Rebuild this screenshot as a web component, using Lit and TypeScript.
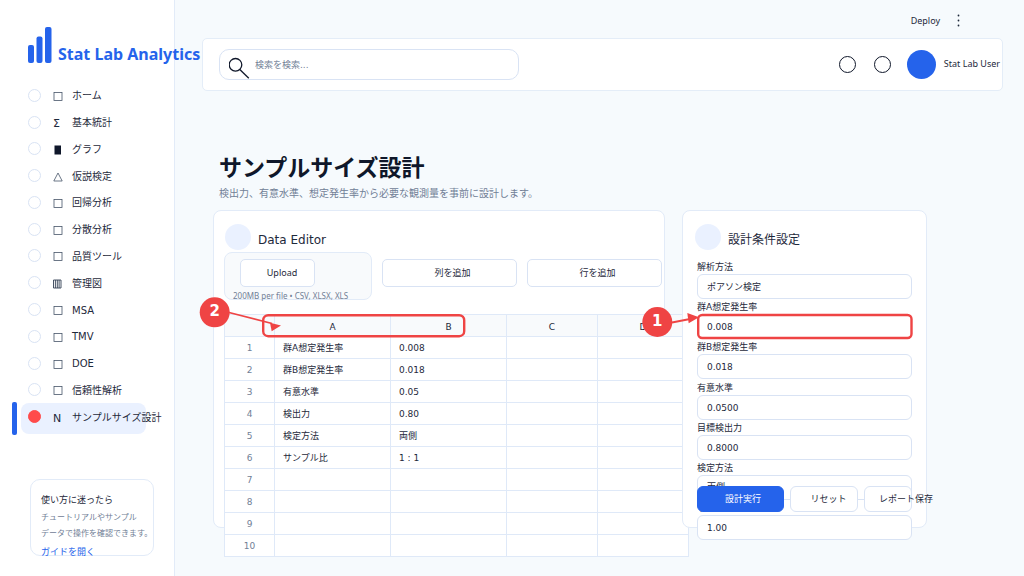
import { LitElement, html, css, svg } from "lit";
import { customElement, state } from "lit/decorators.js";
import { classMap } from "lit/directives/class-map.js";

type IconKind = "box" | "bar" | "triangle" | "grid" | "sigma" | "n";

interface NavEntry {
  label: string;
  icon: IconKind;
}

interface Field {
  id: string;
  label: string;
  value: string;
  options?: string[];
}

const NAV: NavEntry[] = [
  { label: "ホーム", icon: "box" },
  { label: "基本統計", icon: "sigma" },
  { label: "グラフ", icon: "bar" },
  { label: "仮説検定", icon: "triangle" },
  { label: "回帰分析", icon: "box" },
  { label: "分散分析", icon: "box" },
  { label: "品質ツール", icon: "box" },
  { label: "管理図", icon: "grid" },
  { label: "MSA", icon: "box" },
  { label: "TMV", icon: "box" },
  { label: "DOE", icon: "box" },
  { label: "信頼性解析", icon: "box" },
  { label: "サンプルサイズ設計", icon: "n" },
];

const ROWS: string[][] = [
  ["群A想定発生率", "0.008"],
  ["群B想定発生率", "0.018"],
  ["有意水準", "0.05"],
  ["検出力", "0.80"],
  ["検定方法", "両側"],
  ["サンプル比", "1 : 1"],
  [],
  [],
  [],
  [],
];

const FIELDS: Field[] = [
  { id: "method", label: "解析方法", value: "ポアソン検定", options: ["ポアソン検定"] },
  { id: "rate-a", label: "群A想定発生率", value: "0.008" },
  { id: "rate-b", label: "群B想定発生率", value: "0.018" },
  { id: "alpha", label: "有意水準", value: "0.0500" },
  { id: "power", label: "目標検出力", value: "0.8000" },
  { id: "side", label: "検定方法", value: "両側", options: ["両側", "片側"] },
  { id: "ratio", label: "サンプル比", value: "1.00" },
];

const shared = css`
  *,
  *::before {
    box-sizing: border-box;
  }
  button,
  input,
  select {
    font: inherit;
    color: inherit;
    margin: 0;
  }
  button {
    cursor: pointer;
  }
`;

@customElement("lab-sidebar")
export class LabSidebar extends LitElement {
  @state() private selected = NAV.length - 1;

  static styles = [
    shared,
    css`
      :host {
        display: flex;
        flex-direction: column;
        flex: none;
        width: 175px;
        background: #ffffff;
        border-right: 1px solid #e2ebf8;
        padding: 27px 20px 20px 28px;
        white-space: nowrap;
      }
      .brand {
        display: flex;
        align-items: flex-end;
        gap: 6px;
        height: 36px;
        color: #2563eb;
        font: bold 16px/18px "Noto Sans", "Noto Sans CJK JP", sans-serif;
      }
      .brand svg {
        flex: none;
      }
      .nav {
        display: grid;
        grid-template-columns: minmax(0, 1fr);
        grid-auto-rows: 1fr;
        height: 348px;
        margin-top: 19px;
      }
      .item {
        position: relative;
        display: grid;
        grid-template-columns: 13px 7px minmax(0, 1fr);
        column-gap: 12px;
        align-items: center;
        font-size: 10px;
        cursor: pointer;
      }
      .item.active {
        margin: 0 8px -4px -7px;
        padding: 0 0 4px 7px;
        background: #eaf1ff;
        border-radius: 8px;
      }
      .item.active::before {
        content: "";
        position: absolute;
        left: -9px;
        top: -1px;
        bottom: -1px;
        width: 5px;
        border-radius: 2px;
        background: #2563eb;
      }
      .radio {
        appearance: none;
        width: 13px;
        height: 13px;
        border: 1px solid #d9e3f4;
        border-radius: 50%;
        background: #ffffff;
      }
      .radio:checked {
        border-color: #ff4b4b;
        background: #ff4b4b;
      }
      .icon {
        display: block;
        padding-top: 2px;
        overflow: visible;
      }
      .name {
        padding-top: 2px;
      }
      .help {
        height: 77px;
        margin: 49px 0 0 2px;
        padding: 11px 10px;
        border: 1px solid #e2ebf8;
        border-radius: 10px;
        font-size: 8px;
        line-height: 16px;
        color: #718096;
      }
      .help h2 {
        margin: 0 0 1px;
        font-size: 9px;
        font-weight: 400;
        line-height: 18px;
        color: #1e293b;
      }
      .help p {
        margin: 0 0 1px;
      }
      .help a {
        font-size: 9px;
        line-height: 18px;
        color: #2563eb;
        text-decoration: none;
      }
    `,
  ];

  private icon(kind: IconKind) {
    const shapes = {
      box: svg`<rect x="1" y="1.5" width="8" height="8" fill="none" stroke="#475569" stroke-width="0.8" />`,
      bar: svg`<rect x="1.5" y="1.5" width="6.5" height="9" fill="#0f172a" />`,
      triangle: svg`<path d="M5 2 9.2 10H0.8Z" fill="none" stroke="#475569" stroke-width="0.8" />`,
      grid: svg`<path d="M0.5 2H8V10H0.5ZM2.4 2V10M4.3 2V10M6.1 2V10" fill="none" stroke="#334155" stroke-width="0.9" />`,
      sigma: svg`<text x="0" y="9" font-size="11" fill="#1e293b">Σ</text>`,
      n: svg`<text x="0" y="10" font-size="11" fill="#1e293b">N</text>`,
    };
    return html`<svg class="icon" width="12" height="13" viewBox="0 0 12 11" aria-hidden="true">${shapes[kind]}</svg>`;
  }

  render() {
    return html`
      <div class="brand">
        <svg width="24" height="36" viewBox="0 0 24 36" fill="#2563eb" aria-hidden="true">
          <rect x="0" y="18" width="6" height="18" rx="2" />
          <rect x="8.5" y="9.5" width="6" height="26.5" rx="2" />
          <rect x="17" y="0" width="6.5" height="36" rx="2" />
        </svg>
        <span>Stat Lab Analytics</span>
      </div>
      <nav class="nav">
        ${NAV.map(
          (entry, i) => html`
            <label class=${classMap({ item: true, active: i === this.selected })}>
              <input
                class="radio"
                type="radio"
                name="page"
                .checked=${i === this.selected}
                @change=${() => (this.selected = i)}
              />
              ${this.icon(entry.icon)}
              <span class="name">${entry.label}</span>
            </label>
          `
        )}
      </nav>
      <section class="help">
        <h2>使い方に迷ったら</h2>
        <p>チュートリアルやサンプル<br />データで操作を確認できます。</p>
        <a href="#guide">ガイドを開く</a>
      </section>
    `;
  }
}

@customElement("lab-topbar")
export class LabTopbar extends LitElement {
  static styles = [
    shared,
    css`
      :host {
        display: block;
        padding: 0 21px 0 27px;
        font-size: 9px;
      }
      .tools {
        display: flex;
        align-items: center;
        justify-content: flex-end;
        gap: 14px;
        height: 38px;
        padding: 4px 40px 0 0;
      }
      .plain {
        display: block;
        padding: 0;
        border: 0;
        background: none;
      }
      .latin {
        font-family: "Noto Sans", sans-serif;
      }
      .bar {
        display: flex;
        align-items: center;
        height: 53px;
        padding: 0 2px 0 16px;
        border: 1px solid #e4edf8;
        border-radius: 5px;
        background: #ffffff;
      }
      .search {
        display: flex;
        align-items: flex-start;
        width: 300px;
        height: 31px;
        margin-right: auto;
        padding-left: 9px;
        border: 1px solid #d9e3f4;
        border-radius: 10px;
      }
      .search svg {
        flex: none;
        margin-top: 7px;
      }
      .query {
        flex: 1;
        min-width: 0;
        height: 29px;
        padding: 0 5px;
        border: 0;
        outline: 0;
        background: none;
      }
      .query::placeholder {
        color: #718096;
        opacity: 1;
      }
      .round {
        width: 17px;
        height: 17px;
        margin-right: 18px;
        padding: 0;
        border: 1px solid #0f172a;
        border-radius: 50%;
        background: none;
      }
      .avatar {
        width: 29px;
        height: 29px;
        margin: 0 8px 0 -2px;
        border-radius: 50%;
        background: #2563eb;
      }
    `,
  ];

  render() {
    return html`
      <div class="tools">
        <button class="plain latin">Deploy</button>
        <button class="plain" aria-label="メニュー">
          <svg width="9" height="14" viewBox="0 0 9 14" fill="#1e293b">
            <circle cx="4.5" cy="2.5" r="0.9" />
            <circle cx="4.5" cy="7.5" r="0.9" />
            <circle cx="4.5" cy="12.5" r="0.9" />
          </svg>
        </button>
      </div>
      <header class="bar">
        <label class="search">
          <svg width="21" height="22" viewBox="0 0 21 22" fill="none" stroke="#0f172a" stroke-width="1.3" aria-hidden="true">
            <circle cx="6.5" cy="7.8" r="6.3" />
            <path d="M10.8 12.5 19.8 21.3" />
          </svg>
          <input class="query" type="text" aria-label="検索" placeholder="検索を検索..." />
        </label>
        <button class="round" aria-label="通知"></button>
        <button class="round" aria-label="ヘルプ"></button>
        <span class="avatar"></span>
        <span class="latin">Stat Lab User</span>
      </header>
    `;
  }
}

@customElement("data-editor")
export class DataEditor extends LitElement {
  static styles = [
    shared,
    css`
      :host {
        display: block;
        height: 318px;
        padding: 13px 2px 0 10px;
        border: 1px solid #e2ebf8;
        border-radius: 8px;
        background: #ffffff;
        font-size: 9px;
      }
      .head {
        display: flex;
        gap: 7px;
        height: 26px;
        padding-left: 1px;
      }
      .dot {
        width: 26px;
        height: 26px;
        border-radius: 50%;
        background: #eaf1ff;
      }
      .head h2 {
        margin: 0;
        padding-top: 8px;
        font-size: 12px;
        line-height: 16px;
        font-weight: 400;
      }
      .actions {
        display: grid;
        grid-template-columns: 148px 1fr 1fr;
        column-gap: 10px;
        margin-top: 2px;
        align-items: start;
      }
      .drop {
        height: 48px;
        padding: 6px 8px 0;
        border: 1px solid #e2ebf8;
        border-radius: 8px;
        background: #f8fafc;
      }
      .btn {
        display: block;
        width: 100%;
        height: 28px;
        padding: 0 0 0 6px;
        border: 1px solid #d9e3f4;
        border-radius: 5px;
        background: #ffffff;
      }
      .drop .btn {
        width: 75px;
        margin-left: 7px;
        padding-left: 9px;
        font-family: "Noto Sans", sans-serif;
      }
      .actions > .btn {
        margin-top: 7px;
      }
      .hint {
        margin: 0;
        padding-top: 3px;
        font: 8px/12px "Noto Sans", sans-serif;
        color: #718096;
        white-space: nowrap;
      }
      .sheet {
        position: relative;
        width: calc(100% + 27px);
        margin-top: 14px;
        border-collapse: collapse;
        table-layout: fixed;
        background: #ffffff;
      }
      .sheet th,
      .sheet td {
        height: 22px;
        padding: 1px 8px;
        border: 1px solid #dfe9f8;
        font-weight: 400;
        line-height: 12px;
        text-align: left;
      }
      .sheet thead th {
        background: #f8fafc;
        padding-top: 3px;
        text-align: center;
      }
      .sheet tbody th {
        color: #718096;
        text-align: center;
      }
      .c0 {
        width: 50px;
      }
      .c1 {
        width: 25%;
      }
      .c2 {
        width: 25%;
      }
    `,
  ];

  render() {
    return html`
      <div class="head">
        <span class="dot"></span>
        <h2>Data Editor</h2>
      </div>
      <div class="actions">
        <div class="drop">
          <button class="btn">Upload</button>
          <p class="hint">200MB per file • CSV, XLSX, XLS</p>
        </div>
        <button class="btn">列を追加</button>
        <button class="btn">行を追加</button>
      </div>
      <table class="sheet">
        <colgroup>
          <col class="c0" />
          <col class="c1" />
          <col class="c2" />
          <col />
          <col />
        </colgroup>
        <thead>
          <tr>
            <th></th>
            ${["A", "B", "C", "D"].map((name) => html`<th scope="col">${name}</th>`)}
          </tr>
        </thead>
        <tbody>
          ${ROWS.map(
            (row, i) => html`
              <tr>
                <th scope="row">${i + 1}</th>
                ${[0, 1, 2, 3].map((c) => html`<td>${row[c] ?? ""}</td>`)}
              </tr>
            `
          )}
        </tbody>
      </table>
    `;
  }
}

@customElement("design-form")
export class DesignForm extends LitElement {
  static styles = [
    shared,
    css`
      :host {
        position: relative;
        display: block;
        height: 318px;
        padding: 13px 14px 0;
        border: 1px solid #e2ebf8;
        border-radius: 8px;
        background: #ffffff;
        font-size: 9px;
      }
      .head {
        display: flex;
        gap: 7px;
        height: 26px;
        margin-left: -2px;
      }
      .dot {
        width: 26px;
        height: 26px;
        border-radius: 50%;
        background: #eaf1ff;
      }
      .head h2 {
        margin: 0;
        padding-top: 8px;
        font-size: 12px;
        line-height: 16px;
        font-weight: 400;
      }
      .fields {
        display: grid;
        grid-auto-rows: 1fr;
        height: 281px;
        margin-top: 9px;
      }
      .field {
        display: flex;
        flex-direction: column;
        justify-content: flex-end;
      }
      .field label {
        line-height: 14px;
      }
      .control {
        appearance: none;
        width: 100%;
        height: 25px;
        padding: 1px 9px 0;
        border: 1px solid #d9e3f4;
        border-radius: 6px;
        outline: 0;
        background: #ffffff;
      }
      .buttons {
        position: absolute;
        left: 14px;
        right: 14px;
        bottom: 15px;
        display: grid;
        grid-template-columns: 87px 68px 1fr;
        gap: 6px;
      }
      .btn {
        height: 26px;
        padding: 0 0 0 9px;
        border: 1px solid #d9e3f4;
        border-radius: 6px;
        background: #ffffff;
        white-space: nowrap;
      }
      .btn.primary {
        padding-left: 5px;
        border-color: #2563eb;
        background: #2563eb;
        color: #ffffff;
      }
      .btn.last {
        min-width: 0;
        padding-left: 14px;
        text-align: left;
      }
    `,
  ];

  private control(f: Field) {
    return f.options
      ? html`<select class="control" id=${f.id}>
          ${f.options.map((o) => html`<option ?selected=${o === f.value}>${o}</option>`)}
        </select>`
      : html`<input class="control" id=${f.id} type="text" .value=${f.value} />`;
  }

  render() {
    return html`
      <div class="head">
        <span class="dot"></span>
        <h2>設計条件設定</h2>
      </div>
      <form class="fields">
        ${FIELDS.map(
          (f) => html`
            <div class="field">
              <label for=${f.id}>${f.label}</label>
              ${this.control(f)}
            </div>
          `
        )}
      </form>
      <div class="buttons">
        <button class="btn primary">設計実行</button>
        <button class="btn">リセット</button>
        <button class="btn last">レポート保存</button>
      </div>
    `;
  }
}

@customElement("app-root")
export class AppRoot extends LitElement {
  static styles = [
    shared,
    css`
      :host {
        position: relative;
        display: flex;
        min-height: 100vh;
        background: #f6fafd;
        color: #1e293b;
        font-family: "DejaVu Sans", "Noto Sans CJK JP", sans-serif;
        line-height: 1.2;
      }
      .main {
        flex: 1;
        min-width: 0;
      }
      .content {
        padding: 61px 97px 0 38px;
      }
      .intro {
        padding-left: 6px;
      }
      .intro h1 {
        margin: 0;
        font-size: 23px;
        line-height: 32px;
        color: #0f172a;
      }
      .intro p {
        margin: 0;
        font-size: 10px;
        line-height: 20px;
        color: #718096;
      }
      .cards {
        display: grid;
        grid-template-columns: minmax(0, 1fr) 245px;
        column-gap: 17px;
        margin-top: 6px;
      }
      .marks {
        position: absolute;
        left: 0;
        top: 0;
        pointer-events: none;
      }
      .num {
        font: bold 15px "DejaVu Sans", sans-serif;
        text-anchor: middle;
      }
    `,
  ];

  render() {
    return html`
      <lab-sidebar></lab-sidebar>
      <main class="main">
        <lab-topbar></lab-topbar>
        <div class="content">
          <div class="intro">
            <h1>サンプルサイズ設計</h1>
            <p>検出力、有意水準、想定発生率から必要な観測量を事前に設計します。</p>
          </div>
          <div class="cards">
            <data-editor></data-editor>
            <design-form></design-form>
          </div>
        </div>
      </main>
      <svg class="marks" width="930" height="350" viewBox="0 0 930 350" aria-hidden="true">
        <g fill="none" stroke="#ef4444">
          <rect x="263.2" y="315.2" width="201" height="21" rx="5" stroke-width="2.4" />
          <rect x="698.2" y="315" width="213.3" height="23" rx="4" stroke-width="2.4" />
          <path d="M229 312.5 272 323.5M672 322.5 690 319" stroke-width="1.8" />
        </g>
        <g fill="#ef4444">
          <path d="M270 322.7 281 325.5 271.7 331.3Z" />
          <path d="M687.3 313 699 317.3 688.7 323.3Z" />
          <circle cx="214.7" cy="312.3" r="15" />
          <circle cx="657.3" cy="322" r="15" />
        </g>
        <g class="num" fill="#ffffff">
          <text x="214.7" y="316">2</text>
          <text x="657.3" y="326">1</text>
        </g>
      </svg>
    `;
  }
}
